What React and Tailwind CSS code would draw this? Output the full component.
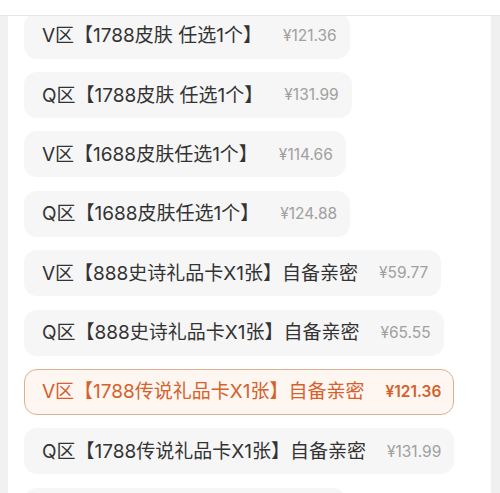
import React from 'react';

const items = [
    { zone: 'V', title: '区【1788皮肤 任选1个】', price: '¥121.36' },
    { zone: 'Q', title: '区【1788皮肤 任选1个】', price: '¥131.99' },
    { zone: 'V', title: '区【1688皮肤任选1个】', price: '¥114.66' },
    { zone: 'Q', title: '区【1688皮肤任选1个】', price: '¥124.88' },
    { zone: 'V', title: '区【888史诗礼品卡X1张】自备亲密', price: '¥59.77' },
    { zone: 'Q', title: '区【888史诗礼品卡X1张】自备亲密', price: '¥65.55' },
    { zone: 'V', title: '区【1788传说礼品卡X1张】自备亲密', price: '¥121.36', active: true },
    { zone: 'Q', title: '区【1788传说礼品卡X1张】自备亲密', price: '¥131.99' },
    { zone: 'V', title: '区【1688皮肤任选1个】', price: '¥114.66' },
];

const Option = ({ item }) => (
    <div
        className={
            item.active
                ? 'flex items-center w-fit h-[46px] shrink-0 pl-[17px] pr-[12px] rounded-[13px] border border-[#dcb196] bg-[#fdf6f1] text-[#d5612b]'
                : 'flex items-center w-fit h-[46px] shrink-0 pl-[17px] pr-[12px] rounded-[13px] border border-transparent bg-[#f6f6f6] text-[#333333]'
        }
    >
        <span className="text-[19px] leading-none whitespace-nowrap proportional-nums">
            {item.zone}
            {item.title}
        </span>
        <span
            className={
                item.active
                    ? 'ml-[21px] text-[15.5px] leading-none font-semibold text-[#d5612b] whitespace-nowrap proportional-nums'
                    : 'ml-[21px] text-[15.5px] leading-none text-[#a0a0a0] whitespace-nowrap proportional-nums'
            }
        >
            {item.price}
        </span>
    </div>
);

export default function App() {
    return (
        <div
            className="w-[500px] h-[493px] overflow-hidden bg-white flex flex-col"
            style={{ fontFamily: 'Inter, "Noto Sans CJK SC", sans-serif' }}
        >
            {/* top bar */}
            <div className="h-[16px] shrink-0 bg-white border-b border-[#e6e6e6] relative z-10"></div>

            <div className="flex flex-1 min-h-0">
                <div className="w-[8px] bg-[#f1f1f1] shrink-0"></div>

                <div className="flex-1 overflow-hidden bg-white pl-[16px]">
                    <div className="flex flex-col gap-[13.4px] -mt-[3.4px]">
                        {items.map((item, i) => (
                            <Option key={i} item={item} />
                        ))}
                    </div>
                </div>

                <div className="w-[9px] bg-[#f0f0f0] shrink-0"></div>
            </div>
        </div>
    );
}
